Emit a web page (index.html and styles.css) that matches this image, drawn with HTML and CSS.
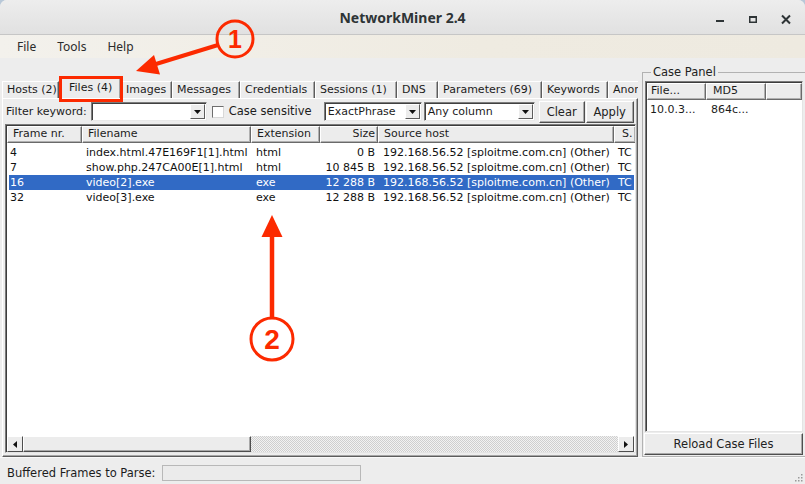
FILE: index.html
```html
<!DOCTYPE html>
<html>
<head>
<meta charset="utf-8">
<title>NetworkMiner 2.4</title>
<link rel="stylesheet" href="styles.css">
</head>
<body>
<div class="window">
  <div class="titlebar">
    <div></div>
    <div class="title">NetworkMiner 2.4</div>
    <div class="wbtns">
      <svg class="wbtn" width="20" height="20" viewBox="0 0 20 20"><rect x="6" y="10" width="8" height="2" fill="#2e3436"/></svg>
      <svg class="wbtn" width="20" height="20" viewBox="0 0 20 20"><rect x="6.75" y="6.75" width="6.5" height="5.5" fill="none" stroke="#2e3436" stroke-width="1.5"/><rect x="6" y="6" width="8" height="2" fill="#2e3436"/></svg>
      <svg class="wbtn" width="20" height="20" viewBox="0 0 20 20"><path d="M6 5.5 L14 13.5 M14 5.5 L6 13.5" stroke="#2e3436" stroke-width="2" fill="none"/></svg>
    </div>
  </div>
  <div class="menubar">
    <span class="menu">File</span>
    <span class="menu">Tools</span>
    <span class="menu">Help</span>
  </div>
  <div class="main">
    <div class="left">
      <div class="tabs">
        <div class="tab t1">Hosts (2)</div>
        <div class="tab t2 sel">Files (4)</div>
        <div class="tab t3">Images</div>
        <div class="tab t4">Messages</div>
        <div class="tab t5">Credentials</div>
        <div class="tab t6">Sessions (1)</div>
        <div class="tab t7">DNS</div>
        <div class="tab t8">Parameters (69)</div>
        <div class="tab t9">Keywords</div>
        <div class="tab t10">Anomalies</div>
      </div>
      <div class="page">
        <div class="filter">
          <span class="flabel">Filter keyword:</span>
          <div class="combo c-keyword"><span class="ctext"></span><span class="cbtn"><svg width="7" height="4" viewBox="0 0 7 4"><path d="M0 0H7L3.5 4Z" fill="#111"/></svg></span></div>
          <span class="check"></span>
          <span class="chlabel">Case sensitive</span>
          <div class="combo c-phrase"><span class="ctext">ExactPhrase</span><span class="cbtn"><svg width="7" height="4" viewBox="0 0 7 4"><path d="M0 0H7L3.5 4Z" fill="#111"/></svg></span></div>
          <div class="combo c-column"><span class="ctext">Any column</span><span class="cbtn"><svg width="7" height="4" viewBox="0 0 7 4"><path d="M0 0H7L3.5 4Z" fill="#111"/></svg></span></div>
          <div class="btn b-clear">Clear</div>
          <div class="btn b-apply">Apply</div>
        </div>
        <div class="grid">
          <div class="ghead">
            <div class="hc">Frame nr.</div>
            <div class="hc">Filename</div>
            <div class="hc">Extension</div>
            <div class="hc hc-num">Size</div>
            <div class="hc">Source host</div>
            <div class="hc hc-last">S.</div>
          </div>
          <div class="gbody">
            <div class="row"><span class="c1">4</span><span>index.html.47E169F1[1].html</span><span class="c3">html</span><span class="num">0 B</span><span class="c5">192.168.56.52 [sploitme.com.cn] (Other)</span><span>TCP</span></div>
            <div class="row"><span class="c1">7</span><span>show.php.247CA00E[1].html</span><span class="c3">html</span><span class="num">10 845 B</span><span class="c5">192.168.56.52 [sploitme.com.cn] (Other)</span><span>TCP</span></div>
            <div class="row selected"><span class="c1">16</span><span>video[2].exe</span><span class="c3">exe</span><span class="num">12 288 B</span><span class="c5">192.168.56.52 [sploitme.com.cn] (Other)</span><span>TCP</span></div>
            <div class="row"><span class="c1">32</span><span>video[3].exe</span><span class="c3">exe</span><span class="num">12 288 B</span><span class="c5">192.168.56.52 [sploitme.com.cn] (Other)</span><span>TCP</span></div>
          </div>
          <div class="hscroll">
            <div class="sbtn"><svg width="4" height="7" viewBox="0 0 4 7"><path d="M4 0V7L0 3.5Z" fill="#111"/></svg></div>
            <div class="thumb"></div>
            <div class="track"></div>
            <div class="sbtn"><svg width="4" height="7" viewBox="0 0 4 7"><path d="M0 0V7L4 3.5Z" fill="#111"/></svg></div>
          </div>
        </div>
      </div>
    </div>
    <div class="side">
      <fieldset class="case">
        <legend>Case Panel</legend>
        <div class="case-body">
          <div class="clist">
            <div class="chead">
              <div class="hc ch1">File...</div>
              <div class="hc ch2">MD5</div>
              <div class="hc ch3"></div>
            </div>
            <div class="crow"><span class="cc1">10.0.3...</span><span class="cc2">864c...</span></div>
          </div>
          <div class="btn reload">Reload Case Files</div>
        </div>
      </fieldset>
    </div>
  </div>
  <div class="status">
    <span class="slabel">Buffered Frames to Parse:</span>
    <div class="progress"></div>
    <svg class="grip" width="10" height="10" viewBox="0 0 10 10">
      <rect x="8" y="2" width="1.5" height="1.5" fill="#9a9a9a"/>
      <rect x="5" y="5" width="1.5" height="1.5" fill="#9a9a9a"/>
      <rect x="8" y="5" width="1.5" height="1.5" fill="#9a9a9a"/>
      <rect x="2" y="8" width="1.5" height="1.5" fill="#9a9a9a"/>
      <rect x="5" y="8" width="1.5" height="1.5" fill="#9a9a9a"/>
      <rect x="8" y="8" width="1.5" height="1.5" fill="#9a9a9a"/>
    </svg>
  </div>
  <div class="redbox"></div>
  <svg class="annot" width="805" height="484" viewBox="0 0 805 484">
    <line x1="218" y1="45" x2="156" y2="64" stroke="#fc2a00" stroke-width="4"/>
    <path d="M136 71 L160 74.5 L154 55 Z" fill="#fc2a00"/>
    <circle cx="235" cy="39" r="18" fill="none" stroke="#fc2a00" stroke-width="3"/>
    <text x="235" y="48" class="num1" text-anchor="middle">1</text>
    <line x1="272" y1="318" x2="272" y2="234" stroke="#fc2a00" stroke-width="4.5"/>
    <path d="M272 215 L282.5 237 L261.5 237 Z" fill="#fc2a00"/>
    <circle cx="272" cy="339" r="21" fill="#fff" stroke="#fc2a00" stroke-width="3"/>
    <text x="272" y="349" class="num2" text-anchor="middle">2</text>
  </svg>
</div>
</body>
</html>
```
FILE: styles.css
```css
* { box-sizing: border-box; }
html, body { margin: 0; padding: 0; }
body {
  width: 805px;
  height: 484px;
  overflow: hidden;
  background: #b8c8d8;
  font-family: "DejaVu Sans", sans-serif;
  font-size: 11px;
  color: #1c1c1c;
}
.window {
  position: relative;
  width: 805px;
  height: 484px;
  background: #ededed;
  border-radius: 7px 7px 0 0;
  overflow: hidden;
  display: flex;
  flex-direction: column;
}

/* title bar */
.titlebar {
  height: 35px;
  flex: none;
  background: linear-gradient(#ededed, #e1e1e1);
  border-bottom: 1px solid #c6c6c6;
  display: grid;
  grid-template-columns: 1fr auto 1fr;
  align-items: center;
}
.title {
  font-family: "Noto Sans", sans-serif;
  font-weight: bold;
  font-size: 14px;
  color: #2e3436;
  padding-top: 1px;
}
.wbtns {
  display: flex;
  justify-content: flex-end;
  gap: 13px;
  padding-right: 9px;
  align-self: start;
  padding-top: 10px;
}
.wbtn { display: block; }

/* menu */
.menubar {
  height: 23px;
  flex: none;
  background: linear-gradient(90deg, #f3f1ec, #efebe1 60%, #eeeae0);
  display: flex;
  align-items: center;
  padding-left: 17px;
  font-family: "Noto Sans", sans-serif;
  font-size: 12px;
  color: #2b2b2b;
}
.menu { margin-right: 21px; }

/* main area */
.main {
  height: 399px;
  flex: none;
  display: flex;
}
.left {
  width: 640px;
  flex: none;
  padding: 20px 2px 0 2px;
  display: flex;
  flex-direction: column;
}
.tabs {
  height: 20px;
  flex: none;
  display: flex;
  align-items: flex-end;
  overflow: hidden;
  position: relative;
  z-index: 1;
}
.tab {
  height: 17px;
  flex: none;
  line-height: 15px;
  padding-left: 4px;
  white-space: nowrap;
  overflow: hidden;
  border-top: 1px solid #ffffff;
  border-left: 1px solid #ffffff;
  border-right: 1px solid #5c5c5c;
  box-shadow: inset -1px 0 #a6a6a6;
  background: #ececec;
}
.tab.sel {
  height: 20px;
  line-height: 17px;
  padding-left: 9px;
}
.t1 { width: 57px; }
.t2 { width: 62px; }
.t3 { width: 51px; }
.t4 { width: 68px; }
.t5 { width: 75px; }
.t6 { width: 82px; }
.t7 { width: 41px; }
.t8 { width: 104px; }
.t9 { width: 66px; }
.t10 { width: 80px; }

.page {
  height: 359px;
  flex: none;
  border-top: 1px solid #ffffff;
  border-left: 1px solid #ffffff;
  border-right: 1px solid #5c5c5c;
  border-bottom: 1px solid #5c5c5c;
  box-shadow: inset -1px -1px #a6a6a6;
  padding: 2px 1px 0 2px;
  display: flex;
  flex-direction: column;
}
.filter {
  height: 23px;
  flex: none;
  display: flex;
  align-items: flex-start;
}
.flabel {
  padding-left: 1px;
  margin-top: 4px;
  white-space: nowrap;
}
.combo {
  height: 19px;
  margin-top: 1px;
  background: #fff;
  border: 1px solid;
  border-color: #7c7c7c #e8e8e8 #e8e8e8 #7c7c7c;
  box-shadow: inset 1px 1px #404040;
  display: flex;
  align-items: stretch;
  padding: 1px 1px 1px 2px;
}
.ctext {
  flex: 1;
  line-height: 15px;
  padding-left: 1px;
  white-space: nowrap;
  overflow: hidden;
}
.cbtn {
  width: 15px;
  flex: none;
  background: #ececec;
  border: 1px solid;
  border-color: #ffffff #5c5c5c #5c5c5c #ffffff;
  display: flex;
  align-items: center;
  justify-content: center;
}
.c-keyword { width: 116px; margin-left: 4px; }
.c-phrase { width: 98px; margin-left: 12px; }
.c-column { width: 111px; margin-left: 2px; }
.check {
  width: 12px;
  height: 12px;
  margin: 5px 0 0 5px;
  background: #fff;
  border: 1px solid;
  border-color: #6e6e6e #d8d8d8 #d8d8d8 #6e6e6e;
  flex: none;
}
.chlabel {
  margin: 3px 0 0 5px;
  white-space: nowrap;
  font-size: 11.5px;
}
.btn {
  background: #ececec;
  border: 1px solid;
  border-color: #ffffff #4e4e4e #4e4e4e #ffffff;
  box-shadow: inset -1px -1px #a8a8a8;
  display: flex;
  align-items: center;
  justify-content: center;
  white-space: nowrap;
  font-size: 11.5px;
  color: #222;
}
.b-clear { width: 46px; height: 22px; margin-left: 4px; }
.b-apply { width: 48px; height: 22px; margin-left: 1px; }

/* list view */
.grid {
  flex: 1;
  margin-bottom: 3px;
  background: #fff;
  border: 1px solid;
  border-color: #7a7a7a #e4e4e4 #e4e4e4 #7a7a7a;
  box-shadow: inset 1px 1px #3c3c3c;
  display: flex;
  flex-direction: column;
  padding: 1px 1px 0 1px;
  overflow: hidden;
}
.ghead {
  height: 17px;
  flex: none;
  display: grid;
  grid-template-columns: 75px 169px 69px 58px 236px 22px 1fr;
  background: #ececec;
}
.hc {
  border-top: 1px solid #ffffff;
  border-left: 1px solid #ffffff;
  border-right: 1px solid #6a6a6a;
  border-bottom: 1px solid #6a6a6a;
  box-shadow: inset -1px -1px #b0b0b0;
  padding-left: 5px;
  line-height: 14px;
  white-space: nowrap;
  overflow: hidden;
  background: #ececec;
}
.hc-num { text-align: right; padding-right: 2px; }
.hc-last { padding-left: 7px; }
.gbody {
  flex: 1;
  padding: 2px 0 0 2px;
}
.row {
  height: 15px;
  line-height: 15px;
  display: grid;
  grid-template-columns: 73px 169px 69px 58px 236px 18px;
  white-space: nowrap;
  color: #111;
}
.row span {
  overflow: hidden;
  padding-left: 4px;
}
.row .c1 { padding-left: 1px; }
.row .c3, .row .c5 { padding-left: 5px; }
.row .num { text-align: right; padding-right: 3px; padding-left: 0; }
.row.selected { background: #316ac5; color: #fff; }

.hscroll {
  height: 16px;
  flex: none;
  display: flex;
}
.sbtn {
  width: 16px;
  flex: none;
  background: #ececec;
  border: 1px solid;
  border-color: #ffffff #4e4e4e #4e4e4e #ffffff;
  display: flex;
  align-items: center;
  justify-content: center;
}
.thumb {
  width: 228px;
  flex: none;
  background: #ececec;
  border: 1px solid;
  border-color: #ffffff #4e4e4e #4e4e4e #ffffff;
  box-shadow: inset -1px -1px #a8a8a8;
}
.track {
  flex: 1;
  background: repeating-conic-gradient(#cfcfcf 0 25%, #f2f2f2 0 50%) 0 0 / 2px 2px;
}

/* case panel */
.side {
  flex: 1;
  padding: 8px 0 0 2px;
  min-width: 0;
}
.case {
  margin: 0;
  width: 175px;
  padding: 2px 3px 1px 2px;
  border: 1px solid #b2b2b2;
  min-width: 0;
}
.case legend {
  padding: 0 2px;
  margin-left: 6px;
  line-height: 13px;
  font-size: 11.5px;
  color: #222;
}
.case-body {
  width: 158px;
  display: flex;
  flex-direction: column;
}
.clist {
  height: 351px;
  background: #fff;
  border: 1px solid;
  border-color: #7a7a7a #e4e4e4 #e4e4e4 #7a7a7a;
  box-shadow: inset 1px 1px #3c3c3c;
  padding: 1px 0 0 1px;
}
.chead {
  height: 17px;
  display: grid;
  grid-template-columns: 59px 60px 1fr;
}
.ch1 { padding-left: 3px; }
.ch2 { padding-left: 6px; }
.crow {
  display: grid;
  grid-template-columns: 59px 60px;
  height: 15px;
  line-height: 15px;
  margin-top: 2px;
  white-space: nowrap;
}
.cc1 { padding-left: 3px; }
.cc2 { padding-left: 5px; }
.reload {
  height: 22px;
  margin-top: 1px;
  margin-left: -1px;
}

/* status bar */
.status {
  flex: 1;
  display: flex;
  align-items: center;
  padding: 3px 0 0 7px;
  border-top: 1px solid #fafafa;
}
.slabel { white-space: nowrap; font-size: 11.5px; }
.progress {
  width: 199px;
  height: 16px;
  margin-left: 6px;
  border: 1px solid #b8b8b8;
  background: #ebebeb;
}
.grip {
  margin-left: auto;
  align-self: flex-end;
  margin-right: 2px;
  margin-bottom: 2px;
}

/* annotations */
.redbox {
  position: absolute;
  left: 59px;
  top: 76px;
  width: 64px;
  height: 26px;
  border: 3px solid #fc2a00;
  z-index: 5;
}
.annot {
  position: absolute;
  left: 0;
  top: 0;
  z-index: 6;
  pointer-events: none;
}
.num1 {
  font-family: "Liberation Sans", sans-serif;
  font-weight: bold;
  font-size: 25px;
  fill: #fc2a00;
}
.num2 {
  font-family: "Liberation Sans", sans-serif;
  font-weight: bold;
  font-size: 28px;
  fill: #fc2a00;
}
```
